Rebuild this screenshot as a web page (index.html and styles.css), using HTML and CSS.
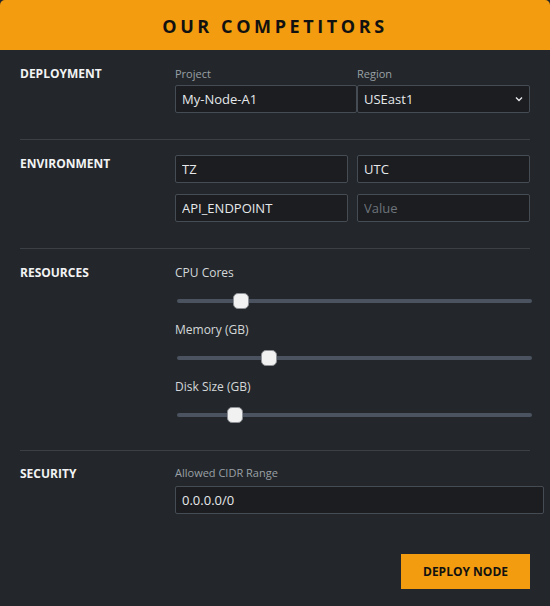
FILE: index.html
```html
<!DOCTYPE html>
<html>
<head>
<meta charset="utf-8">
<link rel="stylesheet" href="styles.css">
</head>
<body>
<div class="panel">
  <header class="head"><h1>OUR COMPETITORS</h1></header>
  <section class="sec">
    <div class="sec-title">DEPLOYMENT</div>
    <div class="fields">
      <div class="pair joined">
        <label class="fld"><span class="lbl">Project</span><input class="inp" type="text" value="My-Node-A1"></label>
        <label class="fld"><span class="lbl">Region</span>
          <div class="select"><span>USEast1</span>
            <svg width="10" height="10" viewBox="0 0 10 10"><path d="M2 3.5 L5 6.5 L8 3.5" fill="none" stroke="#e6e8ea" stroke-width="1.4"/></svg>
          </div>
        </label>
      </div>
    </div>
  </section>
  <section class="sec">
    <div class="sec-title">ENVIRONMENT</div>
    <div class="fields env">
      <div class="pair"><input class="inp" type="text" value="TZ"><input class="inp" type="text" value="UTC"></div>
      <div class="pair"><input class="inp" type="text" value="API_ENDPOINT"><input class="inp" type="text" placeholder="Value"></div>
    </div>
  </section>
  <section class="sec">
    <div class="sec-title">RESOURCES</div>
    <div class="fields res">
      <div class="range-row"><span class="rlbl">CPU Cores</span><input class="range" type="range" min="0" max="1000" value="165"></div>
      <div class="range-row"><span class="rlbl">Memory (GB)</span><input class="range" type="range" min="0" max="1000" value="248"></div>
      <div class="range-row"><span class="rlbl">Disk Size (GB)</span><input class="range" type="range" min="0" max="1000" value="147"></div>
    </div>
  </section>
  <section class="sec last">
    <div class="sec-title">SECURITY</div>
    <div class="fields">
      <span class="lbl cidr">Allowed CIDR Range</span>
      <input class="inp wide" type="text" value="0.0.0.0/0">
    </div>
  </section>
  <div class="actions"><button class="btn">DEPLOY NODE</button></div>
</div>
</body>
</html>
```
FILE: styles.css
```css
html, body { margin: 0; padding: 0; background: #23272b; }
body { font-family: "Open Sans", "Noto Sans", sans-serif; color: #e6e8ea; width: 550px; height: 606px; overflow: hidden; }
.panel { background: #23272b; }
.head { background: #f39c0f; height: 50px; border-radius: 5px 5px 0 0; display: flex; align-items: center; justify-content: center; }
.head h1 { margin: 0; font-size: 18px; font-weight: 700; letter-spacing: 3.6px; color: #111; padding-top: 2px; }
.sec { display: flex; margin: 0 20px; border-bottom: 1px solid #3b4046; }
.sec.last { border-bottom: none; }
.sec-title { width: 155px; flex: none; font-size: 12px; line-height: 14px; font-weight: 700; color: #f2f3f4; }
.fields { flex: 1; display: flex; flex-direction: column; }
.sec:nth-of-type(1) { padding: 17px 0 26px; }
.pair { display: flex; gap: 9px; }
.pair.joined { gap: 0; }
.pair.joined .fld:first-child { width: 182px; }
.pair.joined .fld:last-child { flex: 1; }
.fld { display: flex; flex-direction: column; }
.lbl { font-size: 11px; color: #9aa0a6; line-height: 14px; margin-bottom: 4px; }
.lbl.cidr { margin-bottom: 6px; }
.inp { box-sizing: border-box; height: 28px; background: #1b1d21; border: 1px solid #464c54; border-radius: 2px; color: #e6e8ea; font-family: inherit; font-size: 13px; padding: 0 6px; outline: none; width: 100%; min-width: 0; }
.inp::placeholder { color: #6d737a; }
.pair .inp { flex: 1; }
.select { box-sizing: border-box; height: 28px; background: #1b1d21; border: 1px solid #464c54; border-radius: 2px; display: flex; align-items: center; justify-content: space-between; padding: 0 5px 0 6px; font-size: 13px; color: #e6e8ea; }
.sec:nth-of-type(2) { padding: 15px 0 26px; }
.sec:nth-of-type(2) .sec-title { padding-top: 2px; }
.env { gap: 11px; }
.sec:nth-of-type(3) { padding: 17px 0 24px; }
.res { gap: 0; }
.range-row { display: flex; flex-direction: column; height: 57px; }
.range-row:last-child { height: 46px; }
.rlbl { font-size: 12px; color: #d4d7da; line-height: 14px; }
.range { -webkit-appearance: none; appearance: none; width: 355px; margin: 13px 0 0 2px; height: 16px; background: transparent; }
.range::-webkit-slider-runnable-track { height: 4px; background: #4b5360; border-radius: 2px; }
.range::-webkit-slider-thumb { -webkit-appearance: none; width: 16px; height: 16px; margin-top: -6px; border-radius: 5px; background: #f1f1f1; border: 1px solid #8d9094; box-sizing: border-box; }
.sec:nth-of-type(4) { padding: 15px 0 0; }
.sec:nth-of-type(4) .sec-title { padding-top: 1px; }
.wide { box-sizing: content-box; width: 100%; height: 26px; }
.actions { display: flex; justify-content: flex-end; padding: 40px 20px 0; }
.btn { background: #f39c0f; border: none; border-radius: 0; width: 129px; height: 35px; font-family: inherit; font-size: 12px; font-weight: 700; color: #111; }
```
